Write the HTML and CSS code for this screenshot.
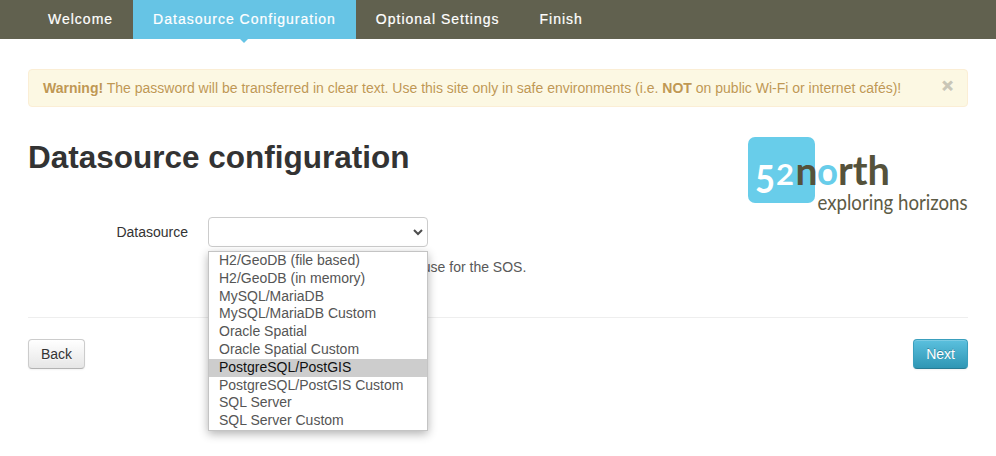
FILE: index.html
```html
<!DOCTYPE html>
<html lang="en">
<head>
<meta charset="utf-8">
<title>Datasource configuration</title>
<link rel="stylesheet" href="styles.css">
</head>
<body>
<nav class="navbar">
  <ul class="steps">
    <li class="step">Welcome</li>
    <li class="step active">Datasource Configuration</li>
    <li class="step">Optional Settings</li>
    <li class="step">Finish</li>
  </ul>
</nav>
<main class="container">
  <div class="alert">
    <p><strong>Warning!</strong> The password will be transferred in clear text. Use this site only in safe environments (i.e. <strong>NOT</strong> on public Wi-Fi or internet cafés)!</p>
    <span class="close">×</span>
  </div>
  <header class="heading">
    <h1>Datasource configuration</h1>
    <svg class="logo" width="220" height="80" viewBox="0 0 220 80">
      <rect width="67" height="66" rx="7" fill="#68cdea"/>
      <g font-weight="700">
        <text x="7" y="55.5" font-size="38" fill="#fff" textLength="20" lengthAdjust="spacingAndGlyphs">5</text>
        <text x="28" y="48" font-size="29" fill="#fff" textLength="18" lengthAdjust="spacingAndGlyphs">2</text>
        <text x="47.500" y="48" font-size="39" fill="#55523b" textLength="22" lengthAdjust="spacingAndGlyphs">n</text>
        <text x="69" y="48" font-size="39" fill="#68cdea" textLength="21" lengthAdjust="spacingAndGlyphs">o</text>
        <text x="90" y="48" font-size="41" fill="#55523b" textLength="52" lengthAdjust="spacingAndGlyphs">rth</text>
      </g>
      <text x="69.500" y="73" font-size="21" fill="#5d5b45" textLength="150" lengthAdjust="spacingAndGlyphs">exploring horizons</text>
    </svg>
  </header>
  <form class="form">
    <div class="label">Datasource</div>
    <div class="controls">
      <div class="select">
        <svg width="10" height="7" viewBox="0 0 10 7"><path d="M1 1l4 4 4-4" fill="none" stroke="#4d4d4d" stroke-width="2"/></svg>
        <ul class="options">
          <li>H2/GeoDB (file based)</li>
          <li>H2/GeoDB (in memory)</li>
          <li>MySQL/MariaDB</li>
          <li>MySQL/MariaDB Custom</li>
          <li>Oracle Spatial</li>
          <li>Oracle Spatial Custom</li>
          <li class="selected">PostgreSQL/PostGIS</li>
          <li>PostgreSQL/PostGIS Custom</li>
          <li>SQL Server</li>
          <li>SQL Server Custom</li>
        </ul>
      </div>
      <p class="help">Select the datasource you want to use for the SOS.</p>
    </div>
  </form>
  <div class="actions">
    <button class="btn">Back</button>
    <button class="btn primary">Next</button>
  </div>
</main>
</body>
</html>
```
FILE: styles.css
```css
* { box-sizing: border-box; }
body {
  min-height: 456px;
  margin: 0;
  background: #fff;
  color: #333;
  font: 14px/20px "Liberation Sans", Arial, sans-serif;
}
ul, p, h1 { margin: 0; padding: 0; list-style: none; }
.navbar { height: 39px; padding-left: 28px; background: #61614f; }
.steps { display: flex; height: 39px; }
.step {
  position: relative;
  padding: 0 20px;
  color: #fff;
  line-height: 39px;
  letter-spacing: 1px;
  white-space: nowrap;
  -webkit-text-stroke: .2px currentColor;
}
.active { background: #66c4e5; }
.active::after {
  content: "";
  position: absolute;
  top: 39px;
  left: 50%;
  margin-left: -4px;
  border: 4px solid transparent;
  border-top-color: #66c4e5;
  border-bottom: 0;
}
.container { width: 940px; margin: 30px 0 0 28px; }
.alert {
  display: flex;
  justify-content: space-between;
  height: 38px;
  padding: 8px 14px;
  border: 1px solid #fbeed5;
  border-radius: 4px;
  background: #fcf8e3;
  color: #c09853;
  text-shadow: 0 1px 0 rgba(255, 255, 255, .5);
  white-space: nowrap;
}
.close {
  color: #c9c6b6;
  font-size: 19px;
  font-weight: 700;
  line-height: 16px;
  -webkit-text-stroke: .8px currentColor;
}
.heading { display: flex; justify-content: space-between; margin-top: 30px; height: 80px; }
h1 { font-size: 31.5px; line-height: 40px; white-space: nowrap; }
.logo { overflow: visible; font-family: Lato, sans-serif; }
.form { display: flex; height: 101px; border-bottom: 1px solid #eee; }
.label { width: 160px; padding-top: 5px; text-align: right; }
.controls { margin-left: 20px; }
.select {
  position: relative;
  display: flex;
  align-items: center;
  justify-content: flex-end;
  width: 220px;
  height: 30px;
  padding-right: 4px;
  border: 1px solid #ccc;
  border-radius: 4px;
  background: #fff;
}
.options {
  position: absolute;
  z-index: 1;
  top: 33px;
  left: -1px;
  width: 220px;
  height: 180px;
  border: 1px solid #c4c4c4;
  background: #fff;
  box-shadow: 0 3px 9px rgba(0, 0, 0, .3);
  color: #555;
}
.options li { height: 17.8px; padding-left: 10px; line-height: 17.8px; white-space: nowrap; }
.options .selected { background: #cdcdcd; color: #111; }
.help { margin-top: 10px; color: #595959; white-space: nowrap; }
.actions { display: flex; justify-content: space-between; margin-top: 21px; }
.btn {
  height: 30px;
  padding: 4px 12px;
  border: 1px solid #ccc;
  border-bottom-color: #b3b3b3;
  border-radius: 4px;
  background: linear-gradient(#fff, #e6e6e6);
  box-shadow: inset 0 1px 0 rgba(255, 255, 255, .2), 0 1px 2px rgba(0, 0, 0, .05);
  color: #333;
  font: inherit;
  text-shadow: 0 1px 1px rgba(255, 255, 255, .75);
}
.primary {
  border-color: #3a9fbd #3a9fbd #287b94;
  background: linear-gradient(#5bc0de, #2f96b4);
  color: #fff;
  text-shadow: 0 -1px 0 rgba(0, 0, 0, .25);
}
```
